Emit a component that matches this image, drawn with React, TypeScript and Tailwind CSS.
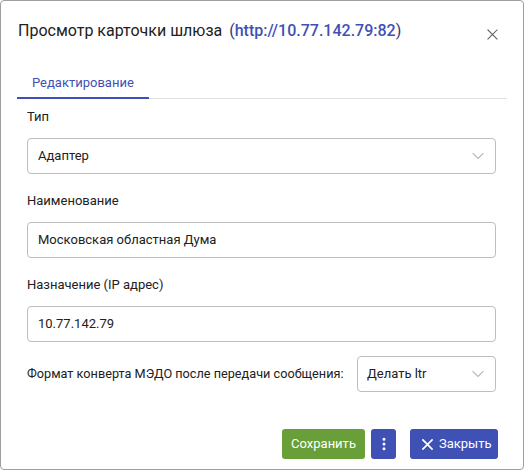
import { ChevronDown, EllipsisVertical } from "lucide-react";

const Cross: React.FC<{ size: number; stroke: number; className?: string }> = ({ size, stroke, className }) => (
  <svg width={size} height={size} viewBox="0 0 12 12" className={className} fill="none" stroke="currentColor" strokeWidth={stroke} strokeLinecap="square">
    <path d="M1 1L11 11M11 1L1 11" />
  </svg>
);

const Field: React.FC<{ label: string; value: string; select?: boolean }> = ({ label, value, select }) => (
  <div className="flex flex-col">
    <div className="text-[13px] leading-[20px] text-[#212121]">{label}</div>
    <div className="mt-[11px] h-[36px] border border-[#bdbdbd] rounded-[4px] flex items-center justify-between pl-[10px] pr-[7px] text-[13px] text-[#212121]">
      <span>{value}</span>
      {select && <ChevronDown size={20} strokeWidth={1} className="text-[#757575]" />}
    </div>
  </div>
);

export default function App() {
  return (
    <div
      className="w-[524px] h-[470px] bg-white border border-[#9e9e9e] rounded-[4px] flex flex-col"
      style={{ fontFamily: "Roboto, 'Liberation Sans', sans-serif" }}
    >
      <div className="flex justify-between items-start pt-[18px] pl-[17px] pr-[25px]">
        <div className="text-[16px] leading-[24px] text-[#212121]">
          Просмотр карточки шлюза{" "}
          <span className="ml-[3px] text-[#2c387e]">(</span>
          <span className="font-medium text-[#3f51b5]">http://10.77.142.79:82</span>
          <span className="text-[#2c387e]">)</span>
        </div>
        <Cross size={11} stroke={1.2} className="mt-[10px] text-[#616161]" />
      </div>

      <div className="mt-[24px] mx-[16px] flex border-b border-[#e0e0e0]">
        <div className="px-[15px] pt-[6px] pb-[4px] text-[13px] leading-[20px] text-[#3f51b5] border-b-2 border-[#3f51b5] -mb-px">
          Редактирование
        </div>
      </div>

      <div className="flex flex-col pl-[26px] pr-[27px] mt-[8px] gap-[17px]">
        <Field label="Тип" value="Адаптер" select />
        <Field label="Наименование" value="Московская областная Дума" />
        <Field label="Назначение (IP адрес)" value="10.77.142.79" />
      </div>

      <div className="flex items-center justify-between pl-[26px] pr-[27px] mt-[14px]">
        <div className="text-[12.7px] whitespace-nowrap text-[#212121]">Формат конверта МЭДО после передачи сообщения:</div>
        <div className="w-[139px] h-[36px] border border-[#bdbdbd] rounded-[4px] flex items-center justify-between pl-[9px] pr-[7px] text-[13px] text-[#212121]">
          <span>Делать ltr</span>
          <ChevronDown size={20} strokeWidth={1} className="text-[#757575]" />
        </div>
      </div>

      <div className="flex justify-end items-center mt-[37px] pr-[25px]">
        <button className="h-[30px] w-[83px] rounded-[3px] bg-[#689f38] text-white text-[13px]">Сохранить</button>
        <button className="ml-[6px] h-[30px] w-[25px] rounded-[3px] bg-[#3f51b5] text-white flex items-center justify-center">
          <EllipsisVertical size={16} strokeWidth={2.5} />
        </button>
        <button className="ml-[14px] h-[30px] w-[88px] pl-[12px] rounded-[3px] bg-[#3f51b5] text-white text-[13px] flex items-center gap-[6px]">
          <Cross size={11} stroke={1.8} />
          Закрыть
        </button>
      </div>
    </div>
  );
}
